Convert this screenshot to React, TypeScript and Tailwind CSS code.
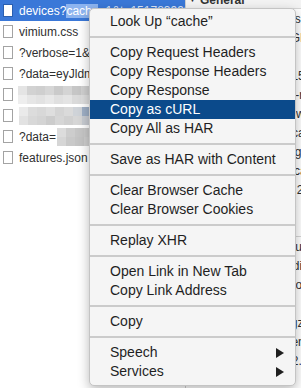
import React from 'react';

type MenuEntry = { label: string; active?: boolean; submenu?: boolean } | 'sep';

const menu: MenuEntry[] = [
  { label: 'Look Up \u201Ccache\u201D' },
  'sep',
  { label: 'Copy Request Headers' },
  { label: 'Copy Response Headers' },
  { label: 'Copy Response' },
  { label: 'Copy as cURL', active: true },
  { label: 'Copy All as HAR' },
  'sep',
  { label: 'Save as HAR with Content' },
  'sep',
  { label: 'Clear Browser Cache' },
  { label: 'Clear Browser Cookies' },
  'sep',
  { label: 'Replay XHR' },
  'sep',
  { label: 'Open Link in New Tab' },
  { label: 'Copy Link Address' },
  'sep',
  { label: 'Copy' },
  'sep',
  { label: 'Speech', submenu: true },
  { label: 'Services', submenu: true },
];

// pixelated (blurred) blocks hiding private urls
const mosaicA = [
  ['#e4e4e4', '#d2d2d2', '#cfcfcf', '#d6d6d6', '#cacaca', '#d4d4d4', '#c6c6c6', '#d0d0d0'],
  ['#eeeeee', '#e6e6e6', '#e2e2e2', '#e8e8e8', '#e0e0e0', '#e4e4e4', '#dadada', '#dedede'],
];
const mosaicB = [
  ['#eaeaea', '#dcdcdc', '#d8d8d8', '#dedede', '#d4d4d4', '#dadada', '#cfd3d8', '#9fb0c6'],
  ['#e2e2e2', '#d8d8d8', '#d4d4d4', '#cccccc', '#d6d6d6', '#d0d0d0', '#d6d6d6', '#c8ccd2'],
];
const mosaicC = [
  ['#dcdcdc', '#cdcdcd', '#c6c6c6', '#cbcbcb'],
  ['#d6d6d6', '#c9c9c9', '#c4c4c4', '#cfcfcf'],
];

function Mosaic({ rows }: { rows: string[][] }) {
  return (
    <div className="flex flex-col">
      {rows.map((r, i) => (
        <div key={i} className="flex">
          {r.map((c, j) => (
            <div key={j} className="w-[9px] h-[9px]" style={{ backgroundColor: c }} />
          ))}
        </div>
      ))}
    </div>
  );
}

function FileIcon({ selected }: { selected?: boolean }) {
  return (
    <div
      className={`ml-[3px] w-[10px] h-[13px] shrink-0 bg-white border ${
        selected ? 'border-[#2a5fb0]' : 'border-[#a3a3a3]'
      }`}
    />
  );
}

function Row({ children, selected }: { children?: React.ReactNode; selected?: boolean }) {
  return (
    <div
      className={`h-[21px] flex items-center gap-[6px] text-[12px] whitespace-nowrap overflow-hidden ${
        selected ? 'bg-[#3a78d8] text-white' : 'bg-white text-[#303030]'
      }`}
    >
      <FileIcon selected={selected} />
      {children}
    </div>
  );
}

function ContextMenu() {
  return (
    <div className="absolute left-[89px] top-[8px] w-[207px] rounded-[5px] border border-[#c4c4c4] bg-[#f5f5f5] pt-[3px] pb-[4px] shadow-[0_4px_12px_rgba(0,0,0,0.28)] overflow-hidden">
      {menu.map((m, i) =>
        m === 'sep' ? (
          <div key={i} className="h-[12px] flex items-center">
            <div className="w-full h-[2px] bg-[#cbcbcb]" />
          </div>
        ) : (
          <div
            key={i}
            className={`h-[19px] flex items-center pl-[20px] pr-[11px] text-[14px] ${
              m.active ? 'bg-[#0b4a8b] text-white' : 'text-[#1f1f1f]'
            }`}
          >
            <span className="flex-1">{m.label}</span>
            {m.submenu && (
              <svg width="8" height="10" viewBox="0 0 8 10">
                <polygon points="0,0 8,5 0,10" fill="#1f1f1f" />
              </svg>
            )}
          </div>
        )
      )}
    </div>
  );
}

export default function App() {
  return (
    <div className="relative w-[301px] h-[388px] overflow-hidden bg-white font-['Liberation_Sans',Arial,sans-serif]">
      <div className="flex h-full">
        {/* request list */}
        <div className="w-[186px] shrink-0 border-r border-[#cfcfcf] flex flex-col">
          <Row selected>
            <span>
              devices?<span className="bg-[#8db4ef]">cache</span>
              <span className="text-[#dce6f7]">=1&amp;t=1517839925</span>
            </span>
          </Row>
          <Row>vimium.css</Row>
          <Row>?verbose=1&amp;x=0</Row>
          <Row>?data=eyJldmVudCI6</Row>
          <Row>
            <div className="ml-[-1px]">
              <Mosaic rows={mosaicA} />
            </div>
          </Row>
          <Row>
            <Mosaic rows={mosaicB} />
          </Row>
          <Row>
            <span>?data=</span>
            <div className="-ml-[5px]">
              <Mosaic rows={mosaicC} />
            </div>
          </Row>
          <Row>features.json</Row>
        </div>

        {/* headers panel */}
        <div className="flex-1 flex flex-col text-[12px] text-[#303030] whitespace-nowrap overflow-hidden">
          <div className="h-[17px] -mt-[8px] flex items-center gap-[3px] pl-[2px] bg-[#f3f3f3] font-bold text-[#333] border-b border-[#d6d6d6]">
            <span className="text-[9px]">▼</span>General
          </div>
          <div className="pl-[10px] flex flex-col">
            <div className="h-[19px] flex items-center">Request URL: https://cl</div>
            <div className="h-[19px] flex items-center">Request Method: GET</div>
            <div className="h-[19px] flex items-center">
              Status Code:&nbsp;&nbsp;&nbsp;&nbsp;&nbsp;&nbsp;&nbsp;&nbsp;&nbsp;&nbsp;&nbsp;&nbsp;&nbsp;&nbsp;&nbsp;&nbsp;&nbsp;&nbsp;&nbsp;&nbsp;&nbsp;
              <span className="inline-block w-[8px] h-[6px] bg-[#2fb52f]" />
            </div>
            <div className="h-[19px] flex items-center">Remote Address: 151.1</div>
            <div className="h-[19px] flex items-center">Referrer Policy: no-ref</div>
            <div className="h-[19px] flex items-center">access-control-allow</div>
            <div className="h-[19px] flex items-center">cache-control: no-ca</div>
            <div className="h-[19px] flex items-center">content-encoding: gz</div>
            <div className="h-[19px] flex items-center">content-type: applica</div>
            <div className="h-[19px] flex items-center">date: Mon, 05 Feb 20</div>
            <div className="h-[19px] flex items-center">Loading: 1 of 3 req</div>
            <div className="h-[19px] flex items-center border-b border-[#d6d6d6]">status: 200 OK</div>
            <div className="h-[19px] flex items-center">strict-transport-secu</div>
            <div className="h-[19px] flex items-center">vary: Accept-Encodin</div>
            <div className="h-[19px] flex items-center">x-content-type-optio</div>
            <div className="h-[19px] flex items-center">accept: */*</div>
            <div className="h-[19px] flex items-center">accept-encoding: gzi</div>
            <div className="h-[19px] flex items-center">accept-language: en-</div>
            <div className="h-[19px] flex items-center">cookie: _ga=GA1.2.</div>
          </div>
        </div>
      </div>

      <ContextMenu />
    </div>
  );
}
